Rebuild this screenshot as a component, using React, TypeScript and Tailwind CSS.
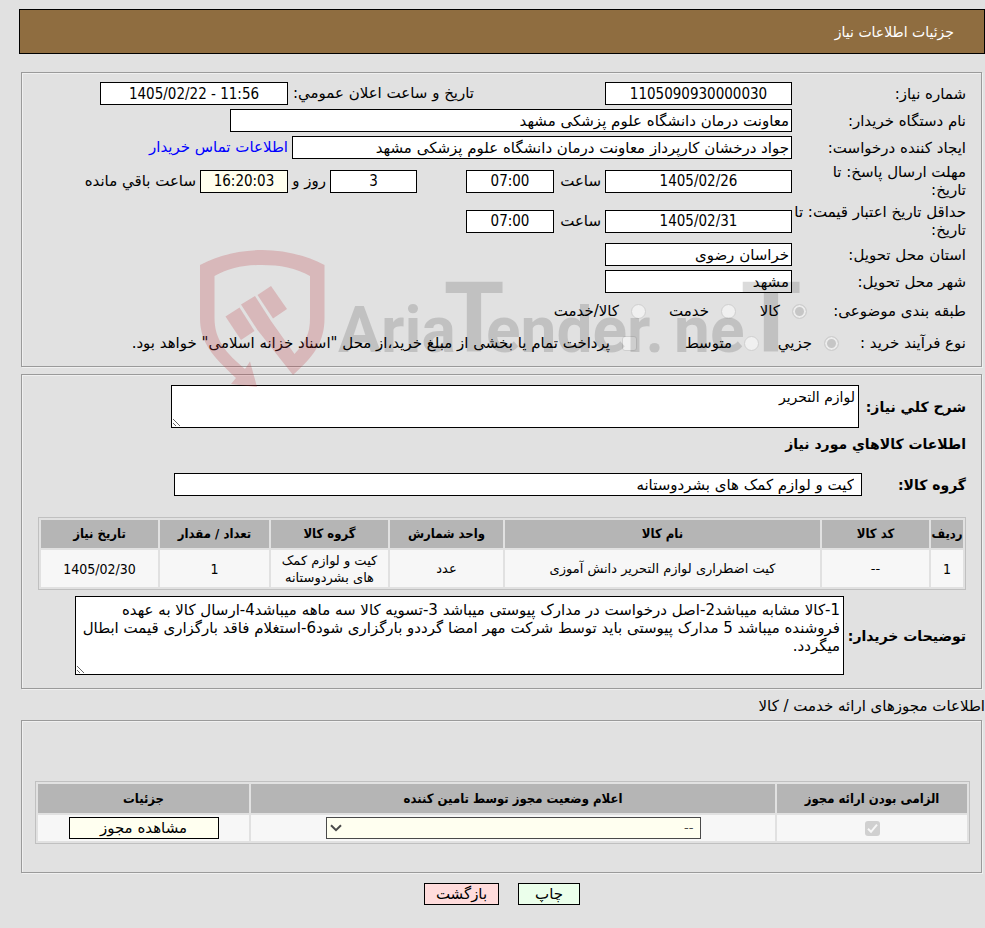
import type { ReactNode } from 'react';

interface GoodsRow {
  index: string;
  code: string;
  name: string;
  unit: string;
  group: string;
  quantity: string;
  date: string;
}

const GOODS: GoodsRow[] = [
  {
    index: '1',
    code: '--',
    name: 'کیت اضطراری لوازم التحریر دانش آموزی',
    unit: 'عدد',
    group: 'کیت و لوازم کمک های بشردوستانه',
    quantity: '1',
    date: '1405/02/30',
  },
];

const PANEL =
  'border border-[#9a9a9a] shadow-[1px_1px_0_#f0f0f0,inset_1px_1px_0_#f0f0f0] ml-[21px] mr-[3px] px-[15px]';
const FIELD = 'h-[23px] border border-black px-0.5';
const NUMERIC = "text-center font-['DejaVu_Sans_Condensed','DejaVu_Sans',sans-serif]";
const TABLE = 'border border-[#c0c0c0] border-separate border-spacing-[2px] text-[13px] text-center table-fixed';
const THEAD = "bg-[#b5b5b5] font-['DejaVu_Sans_Condensed','DejaVu_Sans',sans-serif]";
const RADIO =
  'appearance-none size-[15px] shrink-0 rounded-full border border-[#cfcfcf] bg-[#f0f0f0] checked:bg-[#c6c6c6] checked:shadow-[inset_0_0_0_2px_#ececec]';

interface FieldProps {
  id: string;
  value: string;
  className: string;
  label?: string;
  numeric?: boolean;
  tint?: boolean;
}

function Field({ id, value, className, label, numeric, tint }: FieldProps) {
  return (
    <input
      id={id}
      aria-label={label}
      dir={numeric ? 'ltr' : 'rtl'}
      readOnly
      value={value}
      className={`${FIELD} ${numeric ? NUMERIC : ''} ${tint ? 'bg-[#ffffee]' : 'bg-white'} ${className}`}
    />
  );
}

function Row({ label, htmlFor, children }: { label: string; htmlFor: string; children: ReactNode }) {
  return (
    <div className="flex items-center">
      <label htmlFor={htmlFor} className="w-[174px] shrink-0 leading-[18px] whitespace-pre-line">
        {label}
      </label>
      <div className="flex items-center gap-1">{children}</div>
    </div>
  );
}

function Watermark() {
  return (
    <svg
      className="absolute left-[195px] top-[245px] w-[610px] h-[145px] pointer-events-none"
      viewBox="195 245 610 145"
      aria-hidden="true"
    >
      <g fill="#b82f3a" fillOpacity="0.23">
        <path d="M200 265 C220 255 240 250 262 250 C284 250 305 255 324.5 265 V318 C324.5 342 314 356 293 375 L257.5 330 L241 304.500 L255 296 L271 321 L294.500 354 C306 341 310 334 310 318 V276 C296 268 280 265 262 265 C244 265 229 268 214.500 276 V318 C214.500 340 226 353 245 369 L250 361.500 L257 387 L231 384 L236 378 C212 356 200 342 200 318 Z" />
        <path d="M225.500 316.500 L239.500 307.500 L254.500 331 L241 340 Z" />
        <path d="M257.500 295 L271 286 L287 309 L273 318.500 Z" />
      </g>
      <g
        fill="#000000"
        fillOpacity="0.14"
        fontSize="64"
        fontWeight="700"
        fontFamily="Roboto, 'Liberation Sans', sans-serif"
        direction="ltr"
      >
        <text x="338" y="352">Aria</text>
        <text x="474" y="352" fontSize="98" textAnchor="middle">T</text>
        <text x="486" y="352">ender.</text>
        <text x="674" y="352">ne</text>
        <text x="771" y="352" fontSize="98" textAnchor="middle">T</text>
      </g>
    </svg>
  );
}

export default function App() {
  return (
    <div
      dir="rtl"
      className="relative min-h-screen bg-[#e1e1e1] pt-[9px] pb-[22px] text-[15px] text-black font-['DejaVu_Sans',sans-serif]"
    >
      <header className="ml-[19px] h-[45px] border border-black bg-[#8f6d40] px-[30px] flex items-center text-sm text-white">
        <h1>جزئیات اطلاعات نیاز</h1>
      </header>

      <section className={`${PANEL} mt-[18px] pt-[9px] pb-[9px] flex flex-col gap-1`}>
        <Row label="شماره نیاز:" htmlFor="need-no">
          <Field id="need-no" value="1105090930000030" numeric className="w-[187px]" />
          <label htmlFor="announce" className="w-[309px] pr-[127px] whitespace-nowrap">
            تاریخ و ساعت اعلان عمومي:
          </label>
          <Field id="announce" value="1405/02/22 - 11:56" numeric className="w-[188px]" />
        </Row>
        <Row label="نام دستگاه خریدار:" htmlFor="org">
          <Field id="org" value="معاونت درمان دانشگاه علوم پزشکی مشهد" className="w-[562px]" />
        </Row>
        <Row label="ایجاد کننده درخواست:" htmlFor="creator">
          <Field
            id="creator"
            value="جواد درخشان کارپرداز معاونت درمان دانشگاه علوم پزشکی مشهد"
            className="w-[500px]"
          />
          <a href="#contact" className="text-[#0000ff]">
            اطلاعات تماس خریدار
          </a>
        </Row>
        <Row label={'مهلت ارسال پاسخ: تا\nتاریخ:'} htmlFor="reply-date">
          <Field id="reply-date" value="1405/02/26" numeric className="w-[187px]" />
          <label htmlFor="reply-time" className="w-[43px]">
            ساعت
          </label>
          <Field id="reply-time" value="07:00" numeric className="w-[88px]" />
          <Field id="days" label="روز" value="3" numeric className="w-[87px] mr-[45px]" />
          <label htmlFor="remaining" className="w-[34px] whitespace-nowrap">
            روز و
          </label>
          <Field id="remaining" value="16:20:03" numeric tint className="w-[88px]" />
          <span>ساعت باقي مانده</span>
        </Row>
        <Row label={'حداقل تاریخ اعتبار قیمت: تا\nتاریخ:'} htmlFor="price-date">
          <Field id="price-date" value="1405/02/31" numeric className="w-[187px]" />
          <label htmlFor="price-time" className="w-[43px]">
            ساعت
          </label>
          <Field id="price-time" value="07:00" numeric className="w-[88px]" />
        </Row>
        <Row label="استان محل تحویل:" htmlFor="province">
          <Field id="province" value="خراسان رضوی" className="w-[187px]" />
        </Row>
        <Row label="شهر محل تحویل:" htmlFor="city">
          <Field id="city" value="مشهد" className="w-[187px]" />
        </Row>

        <div className="flex items-center h-7" role="radiogroup" aria-label="طبقه بندی موضوعی">
          <span className="w-[159px]">طبقه بندی موضوعی:</span>
          <label className="flex items-center gap-3 w-[71px]">
            <input type="radio" name="subject" disabled defaultChecked className={RADIO} />
            کالا
          </label>
          <label className="flex items-center gap-3 w-[90px]">
            <input type="radio" name="subject" disabled className={RADIO} />
            خدمت
          </label>
          <label className="flex items-center gap-3">
            <input type="radio" name="subject" disabled className={RADIO} />
            کالا/خدمت
          </label>
        </div>
        <div className="flex items-center h-7 whitespace-nowrap" role="radiogroup" aria-label="نوع فرآیند خرید">
          <span className="w-[127px]">نوع فرآیند خرید :</span>
          <label className="flex items-center gap-3 w-[80px]">
            <input type="radio" name="process" disabled defaultChecked className={RADIO} />
            جزیي
          </label>
          <label className="flex items-center gap-3 w-[122px]">
            <input type="radio" name="process" disabled className={RADIO} />
            متوسط
          </label>
          <label className="flex items-center gap-3">
            <input
              type="checkbox"
              disabled
              className="appearance-none size-[15px] shrink-0 rounded-[3px] border border-[#cfcfcf] bg-[#f0f0f0]"
            />
            پرداخت تمام یا بخشی از مبلغ خرید،از محل "اسناد خزانه اسلامی" خواهد بود.
          </label>
        </div>
      </section>

      <section className={`${PANEL} mt-[7px] pt-[10px] pb-[13px]`}>
        <div className="flex items-center">
          <label htmlFor="summary" className="w-[107px] shrink-0 text-sm font-bold whitespace-nowrap">
            شرح کلي نیاز:
          </label>
          <textarea
            id="summary"
            readOnly
            defaultValue="لوازم التحریر"
            className="w-[688px] h-[43px] border border-black bg-white px-[3px] py-0.5 text-sm leading-[18px] overflow-hidden"
          />
        </div>
        <h2 className="mt-1 h-6 text-sm leading-6 font-bold">اطلاعات کالاهاي مورد نیاز</h2>
        <div className="mt-[17px] flex items-center">
          <label htmlFor="goods-group" className="w-[104px] shrink-0 text-sm font-bold">
            گروه کالا:
          </label>
          <Field id="goods-group" value="کیت و لوازم کمک های بشردوستانه" className="w-[688px] pr-[7px]" />
        </div>
        <table className={`${TABLE} mt-[21px] w-[928px]`}>
          <thead className={THEAD}>
            <tr className="h-[28px]">
              <th className="w-[32px]">ردیف</th>
              <th className="w-[107px]">کد کالا</th>
              <th className="w-[315px]">نام کالا</th>
              <th className="w-[113px]">واحد شمارش</th>
              <th className="w-[117px]">گروه کالا</th>
              <th className="w-[109px]">تعداد / مقدار</th>
              <th className="w-[117px]">تاریخ نیاز</th>
            </tr>
          </thead>
          <tbody className="bg-[#f7f7f7]">
            {GOODS.map((row) => (
              <tr key={row.index} className="h-[37px] leading-[17px]">
                <td className={`${NUMERIC} text-sm`}>{row.index}</td>
                <td>{row.code}</td>
                <td>{row.name}</td>
                <td>{row.unit}</td>
                <td className="px-1">{row.group}</td>
                <td className={`${NUMERIC} text-sm`}>{row.quantity}</td>
                <td className={`${NUMERIC} text-sm`}>{row.date}</td>
              </tr>
            ))}
          </tbody>
        </table>
        <div className="mt-[6px] flex items-center">
          <label htmlFor="notes" className="w-[122px] shrink-0 text-sm font-bold whitespace-nowrap">
            توضیحات خریدار:
          </label>
          <textarea
            id="notes"
            readOnly
            defaultValue="1-کالا مشابه میباشد2-اصل درخواست در مدارک پیوستی میباشد 3-تسویه کالا سه ماهه میباشد4-ارسال کالا به عهده فروشنده میباشد 5 مدارک پیوستی باید توسط شرکت مهر امضا گرددو بارگزاری شود6-استغلام فاقد بارگزاری قیمت ابطال میگردد."
            className="w-[769px] h-[79px] border border-black bg-white px-[3px] py-1 leading-[18px] overflow-hidden"
          />
        </div>
      </section>

      <h2 className="mt-[7px] h-6 leading-5">اطلاعات مجوزهای ارائه خدمت / کالا</h2>

      <section className={`${PANEL} pt-[60px] pb-[28px]`}>
        <table className={`${TABLE} -mx-1 w-[935px]`}>
          <thead className={THEAD}>
            <tr className="h-[29px]">
              <th className="w-[190px]">الزامی بودن ارائه مجوز</th>
              <th className="w-[524px]">اعلام وضعیت مجوز توسط تامین کننده</th>
              <th className="w-[211px]">جزئیات</th>
            </tr>
          </thead>
          <tbody className="bg-[#f7f7f7]">
            <tr className="h-[26px]">
              <td>
                <span className="relative inline-flex align-middle">
                  <input
                    type="checkbox"
                    aria-label="الزامی بودن ارائه مجوز"
                    disabled
                    defaultChecked
                    className="appearance-none size-[15px] rounded-[3px] bg-[#d0d0d0]"
                  />
                  <svg className="absolute inset-0 size-[15px]" viewBox="0 0 15 15" fill="none" stroke="#f7f7f7" strokeWidth="2">
                    <path d="M3 7.8 L6 10.8 L12 3.6" />
                  </svg>
                </span>
              </td>
              <td>
                <span className="relative inline-block align-middle w-[375px] h-[22px]">
                  <select
                    aria-label="اعلام وضعیت مجوز"
                    disabled
                    className="appearance-none w-full h-full block border border-[#4a4a4a] bg-[#fffff0] text-[#4a4a4a] px-1.5 opacity-100"
                  >
                    <option>--</option>
                  </select>
                  <svg className="absolute left-1 top-[7px] w-3 h-2" viewBox="0 0 12 8" fill="none" stroke="#4a4a4a" strokeWidth="2">
                    <path d="M1 1.2 L6 6.2 L11 1.2" />
                  </svg>
                </span>
              </td>
              <td>
                <button
                  type="button"
                  className="align-middle w-[150px] h-[22px] border border-black bg-[#fffff0] text-[15px] leading-5"
                >
                  مشاهده مجوز
                </button>
              </td>
            </tr>
          </tbody>
        </table>
      </section>

      <div className="mt-[10px] ml-[19px] flex justify-center gap-[19px]">
        <button type="button" className="w-[62px] h-[22px] border border-black bg-[#ebffeb] leading-5">
          چاپ
        </button>
        <button type="button" className="w-[75px] h-[22px] border border-black bg-[#ffdcdc] leading-5">
          بازگشت
        </button>
      </div>

      <Watermark />
    </div>
  );
}
